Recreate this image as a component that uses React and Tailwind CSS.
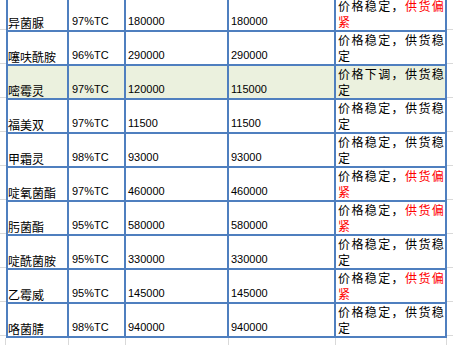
const rows = [
  { name: "异菌脲", purity: "97%TC", a: "180000", b: "180000", note: "tight" },
  { name: "噻呋酰胺", purity: "96%TC", a: "290000", b: "290000", note: "stable" },
  { name: "嘧霉灵", purity: "97%TC", a: "120000", b: "115000", note: "down", green: true },
  { name: "福美双", purity: "97%TC", a: "11500", b: "11500", note: "stable" },
  { name: "甲霜灵", purity: "98%TC", a: "93000", b: "93000", note: "stable" },
  { name: "啶氧菌酯", purity: "97%TC", a: "460000", b: "460000", note: "tight" },
  { name: "肟菌酯", purity: "95%TC", a: "580000", b: "580000", note: "tight" },
  { name: "啶酰菌胺", purity: "95%TC", a: "330000", b: "330000", note: "stable" },
  { name: "乙霉威", purity: "95%TC", a: "145000", b: "145000", note: "tight" },
  { name: "咯菌腈", purity: "98%TC", a: "940000", b: "940000", note: "stable" },
];

const cjk = "font-['Noto_Sans_CJK_SC',sans-serif]";
const num = "font-['Liberation_Sans',Arial,sans-serif] text-[11px]";

function Note({ note }) {
  if (note === "tight") {
    return (
      <>
        <div className="whitespace-nowrap">
          价格稳定，<span className="text-[#ff0000]">供货偏</span>
        </div>
        <div className="text-[#ff0000]">紧</div>
      </>
    );
  }
  return (
    <>
      <div className="whitespace-nowrap">{note === "down" ? "价格下调，供货稳" : "价格稳定，供货稳"}</div>
      <div>定</div>
    </>
  );
}

export default function App() {
  const cell = "h-full border-r-2 border-b-2 border-[#4f7fbf] flex items-end";
  return (
    <div className="w-[453px] h-[345px] overflow-hidden bg-white text-black">
      <div className="-mt-[2px]">
        {rows.map((r) => {
          const bg = r.green ? "bg-[#ebf1de]" : "";
          return (
            <div key={r.name} className="flex h-[34px]">
              <div className="w-[6px] h-[32px] border-b border-[#d9d9d9]" />
              <div className={`${cell} ${bg} w-[63px] border-l-2 ${cjk} text-[12px] leading-[15px]`}>
                <span>{r.name}</span>
              </div>
              <div className={`${cell} ${bg} w-[57px] pl-[3px] pb-[1px] ${num}`}>{r.purity}</div>
              <div className={`${cell} ${bg} w-[103px] pl-[2px] pb-[1px] ${num}`}>{r.a}</div>
              <div className={`${cell} ${bg} w-[107px] pl-[2px] pb-[1px] ${num}`}>{r.b}</div>
              <div
                className={`h-full border-r-2 border-b-2 border-[#4f7fbf] ${bg} w-[111px] pl-[2px] flex flex-col ${cjk} text-[12px] leading-[16px] tracking-[1.4px]`}
              >
                <Note note={r.note} />
              </div>
              <div className="w-[6px] h-[32px] border-b border-[#d9d9d9]" />
            </div>
          );
        })}
        <div className="flex h-[12px]">
          <div className="w-[6px] border-r border-[#d9d9d9]" />
          <div className="w-[63px] border-r border-[#d9d9d9]" />
          <div className="w-[57px] border-r border-[#d9d9d9]" />
          <div className="w-[103px] border-r border-[#d9d9d9]" />
          <div className="w-[107px] border-r border-[#d9d9d9]" />
          <div className="w-[111px] border-r border-[#d9d9d9]" />
        </div>
      </div>
    </div>
  );
}
